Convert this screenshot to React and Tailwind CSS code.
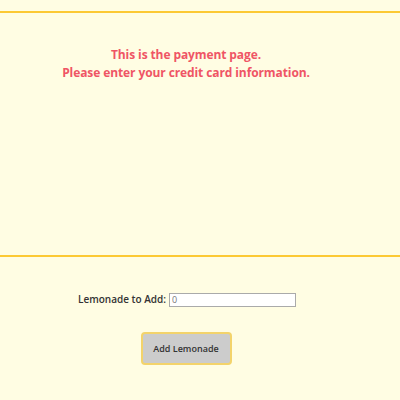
export default function App() {
  return (
    <div className="w-[400px] h-[400px] bg-[#fffde3] overflow-hidden" style={{ fontFamily: '"Open Sans", "Liberation Sans", sans-serif' }}>
      <div className="h-[11px]" />
      <div className="h-[2px] bg-[#fcc934]" />
      <div className="h-[242px] flex flex-col items-center pr-[28px] pt-[33px] text-[12px] leading-[18px] font-bold text-[#ef5565] tracking-[-0.1px]">
        <div>This is the payment page.</div>
        <div>Please enter your credit card information.</div>
      </div>
      <div className="h-[2px] bg-[#fcc934]" />
      <div className="flex flex-col items-center pt-[35px]">
        <div className="flex items-center pr-[26px]">
          <span className="text-[10px] font-semibold text-[#333] mr-[3px]">Lemonade to Add:</span>
          <input defaultValue="0" className="w-[127px] h-[14px] bg-white border border-[#aaa] text-[9px] px-[2px] text-[#777] outline-none" />
        </div>
        <button className="mt-[25px] mr-[28px] w-[91px] h-[33px] bg-[#cccccc] border-2 border-[#f3d36b] rounded-[4px] text-[9px] font-semibold text-[#333]">Add Lemonade</button>
      </div>
    </div>
  );
}
